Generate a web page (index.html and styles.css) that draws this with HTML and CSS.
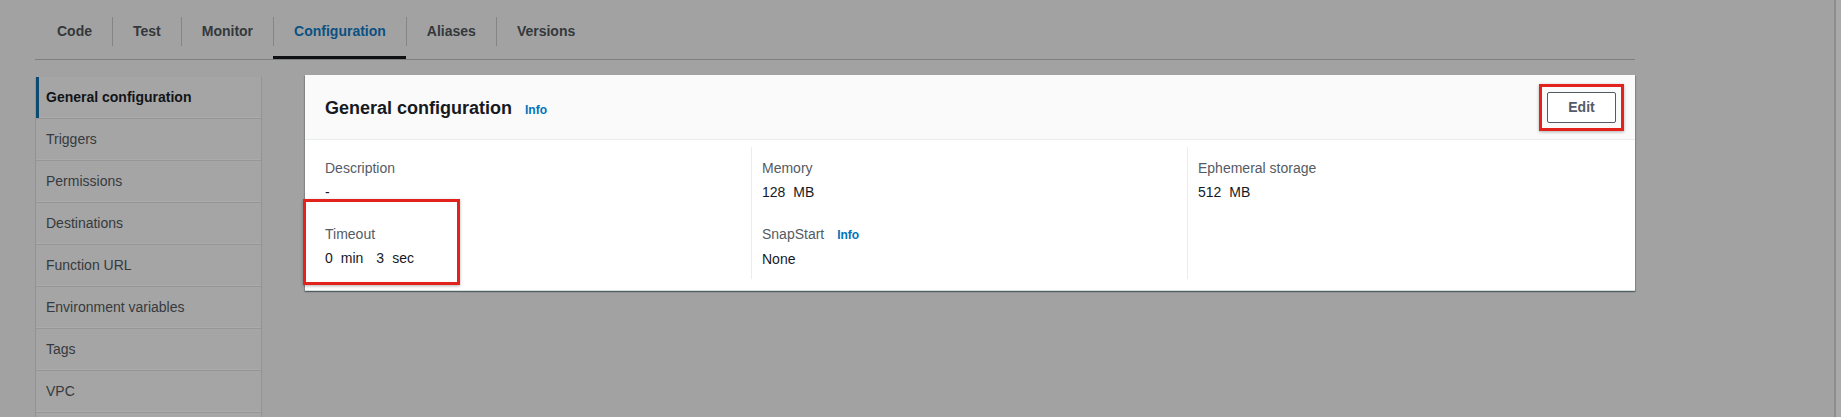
FILE: index.html
```html
<!DOCTYPE html>
<html lang="en">
<head>
<meta charset="utf-8">
<title>General configuration</title>
<link rel="stylesheet" href="styles.css">
</head>
<body>
<div class="screen">
  <div class="main">
    <div class="page">
      <nav class="tabs">
        <div class="tab first"><span class="tab-label">Code</span></div>
        <div class="tab"><span class="tab-label">Test</span></div>
        <div class="tab"><span class="tab-label">Monitor</span></div>
        <div class="tab active"><span class="tab-label">Configuration</span></div>
        <div class="tab"><span class="tab-label">Aliases</span></div>
        <div class="tab"><span class="tab-label">Versions</span></div>
      </nav>
      <div class="content">
        <ul class="sidenav">
          <li class="nav-item active">General configuration</li>
          <li class="nav-item">Triggers</li>
          <li class="nav-item">Permissions</li>
          <li class="nav-item">Destinations</li>
          <li class="nav-item">Function URL</li>
          <li class="nav-item">Environment variables</li>
          <li class="nav-item">Tags</li>
          <li class="nav-item">VPC</li>
          <li class="nav-item"></li>
        </ul>
        <section class="card">
          <header class="card-header">
            <div class="title-group">
              <h2 class="card-title">General configuration</h2>
              <a class="info">Info</a>
            </div>
            <span class="annot-box"><button class="btn">Edit</button></span>
          </header>
          <div class="card-body">
            <div class="col">
              <div class="field">
                <div class="label">Description</div>
                <div class="value">-</div>
              </div>
              <div class="field annotated">
                <div class="label">Timeout</div>
                <div class="value"><span class="num">0</span><span class="unit">min</span><span class="num next">3</span><span class="unit">sec</span></div>
              </div>
            </div>
            <div class="col divided">
              <div class="field">
                <div class="label">Memory</div>
                <div class="value"><span class="num">128</span><span class="unit">MB</span></div>
              </div>
              <div class="field">
                <div class="label">SnapStart <a class="info small-gap">Info</a></div>
                <div class="value">None</div>
              </div>
            </div>
            <div class="col divided">
              <div class="field">
                <div class="label">Ephemeral storage</div>
                <div class="value"><span class="num">512</span><span class="unit">MB</span></div>
              </div>
            </div>
          </div>
        </section>
      </div>
    </div>
  </div>
  <div class="scroll-edge"></div>
</div>
</body>
</html>
```

FILE: styles.css
```css
*, *::before, *::after {
  box-sizing: border-box;
}

html, body {
  margin: 0;
  padding: 0;
  height: 100%;
}

body {
  font-family: "Liberation Sans", Arial, sans-serif;
  font-size: 14px;
  background: #a2a2a2;
  color: #16191f;
  overflow: hidden;
}

.screen {
  display: flex;
  height: 417px;
}

.main {
  flex: 1;
  min-width: 0;
}

.scroll-edge {
  width: 7px;
  border-left: 2px solid #8d8d8d;
  background: #a9a9a9;
}

.page {
  width: 1600px;
  margin-left: 35px;
}

/* Tabs */
.tabs {
  display: flex;
  padding-top: 17px;
  border-bottom: 1px solid #7f7f7f;
}

.tab {
  padding-bottom: 10px;
  border-bottom: 3px solid transparent;
}

.tab-label {
  display: block;
  line-height: 29px;
  padding: 0 20px;
  border-left: 1px solid #858585;
  font-weight: 700;
  color: #34383c;
}

.tab.first .tab-label {
  border-left: none;
  padding-left: 22px;
}

.tab.active {
  border-bottom-color: #0e1014;
}

.tab.active .tab-label {
  color: #0b5182;
}

/* Content */
.content {
  display: grid;
  grid-template-columns: 227px 1fr;
  column-gap: 43px;
  margin-top: 15px;
  align-items: start;
}

.sidenav {
  list-style: none;
  margin: 2px 0 0;
  padding: 0;
  border-left: 1px solid #939393;
  border-right: 1px solid #939393;
  background: #a5a5a5;
}

.nav-item {
  height: 42px;
  line-height: 41px;
  padding-left: 10px;
  border-bottom: 1px solid #969696;
  box-shadow: inset 0 -2px 0 -1px #ababab;
  color: #363a3e;
  white-space: nowrap;
}

.nav-item.active {
  font-weight: 700;
  color: #121417;
  box-shadow: inset 3px 0 0 #0c4a72, inset 0 -2px 0 -1px #ababab;
}

/* Card */
.card {
  background: #ffffff;
  box-shadow: 0 1px 1px 0 rgba(0, 28, 36, 0.3), 1px 1px 1px 0 rgba(0, 28, 36, 0.15), -1px 1px 1px 0 rgba(0, 28, 36, 0.15);
  border-bottom: 1px solid #d5dbdb;
}

.card-header {
  height: 65px;
  display: flex;
  align-items: center;
  justify-content: space-between;
  padding: 0 11px 0 20px;
  background: #fafafa;
  border-bottom: 1px solid #eaeded;
}

.title-group {
  display: flex;
  align-items: baseline;
  padding-top: 1px;
}

.card-title {
  margin: 0;
  font-size: 18px;
  line-height: 24px;
  font-weight: 700;
  color: #16191f;
}

.info {
  margin-left: 13px;
  font-size: 12px;
  font-weight: 700;
  color: #0073bb;
}

.info.small-gap {
  margin-left: 9px;
}

.annot-box {
  display: flex;
  padding: 5px;
  border: 3px solid #e2231c;
  box-shadow: 0 1px 3px rgba(0, 0, 0, 0.3);
}

.btn {
  font-family: inherit;
  font-size: 14px;
  font-weight: 700;
  color: #545b64;
  background: #ffffff;
  border: 1px solid #545b64;
  border-radius: 2px;
  width: 69px;
  height: 31px;
  padding: 0;
}

.card-body {
  display: grid;
  grid-template-columns: 426px 436px 1fr;
  padding: 7px 20px 11px;
}

.col {
  padding: 11px 0 10px;
}

.col.divided {
  border-left: 1px solid #eaeded;
  padding-left: 10px;
}

.field + .field {
  margin-top: 22px;
}

.label {
  line-height: 20px;
  color: #545b64;
  margin-bottom: 4px;
}

.value {
  line-height: 20px;
  color: #16191f;
}

.unit {
  margin-left: 8px;
}

.num.next {
  margin-left: 13px;
}

.annotated {
  position: relative;
}

.annotated::after {
  content: "";
  position: absolute;
  left: -22px;
  top: -25px;
  width: 157px;
  height: 86px;
  border: 3px solid #e2231c;
  box-shadow: 0 1px 3px rgba(0, 0, 0, 0.3);
}
```
